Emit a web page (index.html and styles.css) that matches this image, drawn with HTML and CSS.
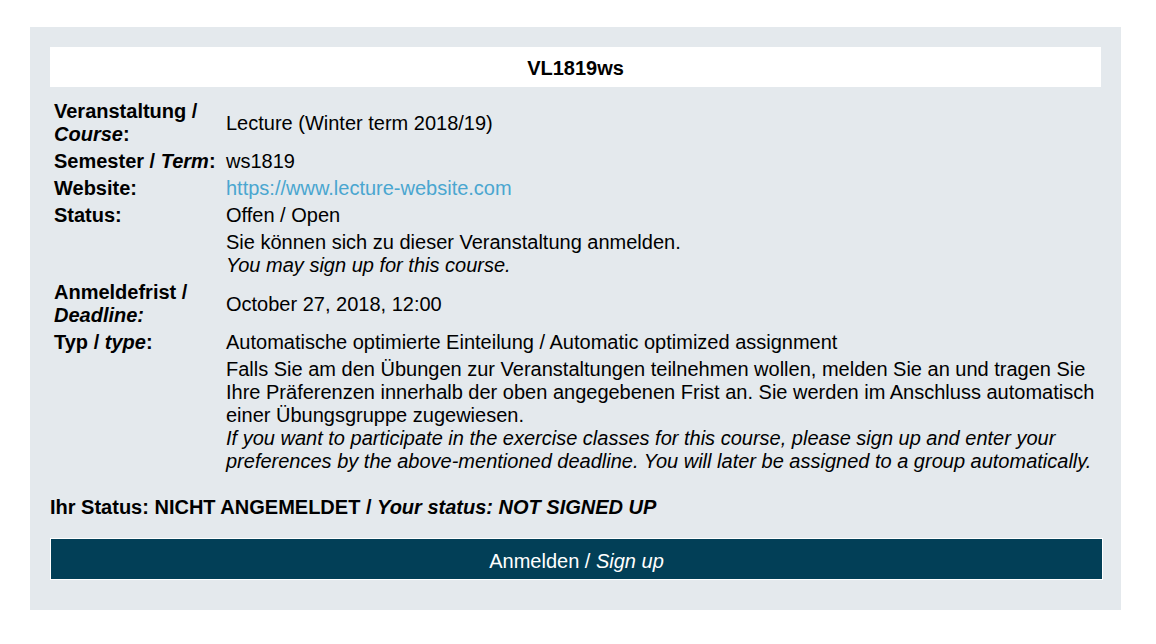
FILE: index.html
```html
<!DOCTYPE html>
<html lang="de">
<head>
<meta charset="utf-8">
<title>VL1819ws</title>
<link rel="stylesheet" href="styles.css">
</head>
<body>
<div class="panel">
  <div class="title">VL1819ws</div>
  <table class="info">
    <tr>
      <th>Veranstaltung / <i>Course</i>:</th>
      <td class="mid">Lecture (Winter term 2018/19)</td>
    </tr>
    <tr>
      <th>Semester / <i>Term</i>:</th>
      <td>ws1819</td>
    </tr>
    <tr>
      <th>Website:</th>
      <td><a class="link" href="#">https://www.lecture-website.com</a></td>
    </tr>
    <tr>
      <th>Status:</th>
      <td>
        <div>Offen / Open</div>
        <div class="block">Sie können sich zu dieser Veranstaltung anmelden.<br><i>You may sign up for this course.</i></div>
      </td>
    </tr>
    <tr>
      <th>Anmeldefrist / <i>Deadline:</i></th>
      <td class="mid">October 27, 2018, 12:00</td>
    </tr>
    <tr>
      <th>Typ / <i>type</i>:</th>
      <td>
        <div>Automatische optimierte Einteilung / Automatic optimized assignment</div>
        <div class="block">Falls Sie am den Übungen zur Veranstaltungen teilnehmen wollen, melden Sie an und tragen Sie Ihre Präferenzen innerhalb der oben angegebenen Frist an. Sie werden im Anschluss automatisch einer Übungsgruppe zugewiesen.<br><i>If you want to participate in the exercise classes for this course, please sign up and enter your preferences by the above-mentioned deadline. You will later be assigned to a group automatically.</i></div>
      </td>
    </tr>
  </table>
  <p class="mystatus">Ihr Status: NICHT ANGEMELDET / <i>Your status: NOT SIGNED UP</i></p>
  <div class="signup" role="button">Anmelden / <i>Sign up</i></div>
</div>
</body>
</html>
```

FILE: styles.css
```css
html, body {
  margin: 0;
  padding: 0;
  background: #ffffff;
}
body {
  font-family: "Liberation Sans", Arial, sans-serif;
  font-size: 20px;
  color: #000000;
}
.panel {
  margin: 27px 35px 0 30px;
  padding: 20px 20px 30px 20px;
  background: #e4e9ed;
}
.title {
  background: #ffffff;
  height: 40px;
  line-height: 43px;
  text-align: center;
  font-weight: bold;
}
.info {
  margin-top: 11px;
  border-collapse: collapse;
  width: 100%;
}
.info th,
.info td {
  padding: 2px 4px;
  text-align: left;
  vertical-align: top;
  line-height: 23px;
}
.info th {
  width: 164px;
  font-weight: bold;
}
.info td.mid {
  vertical-align: middle;
}
.block {
  margin-top: 4px;
}
.link {
  color: #4aa6d0;
  text-decoration: none;
}
.mystatus {
  margin: 21px 0 19px 0;
  font-weight: bold;
  line-height: 23px;
}
.signup {
  margin-right: -2px;
  padding: 11px 0 6px 0;
  border: 1px solid #ffffff;
  background: #023f57;
  color: #ffffff;
  line-height: 23px;
  text-align: center;
  cursor: pointer;
}
```
